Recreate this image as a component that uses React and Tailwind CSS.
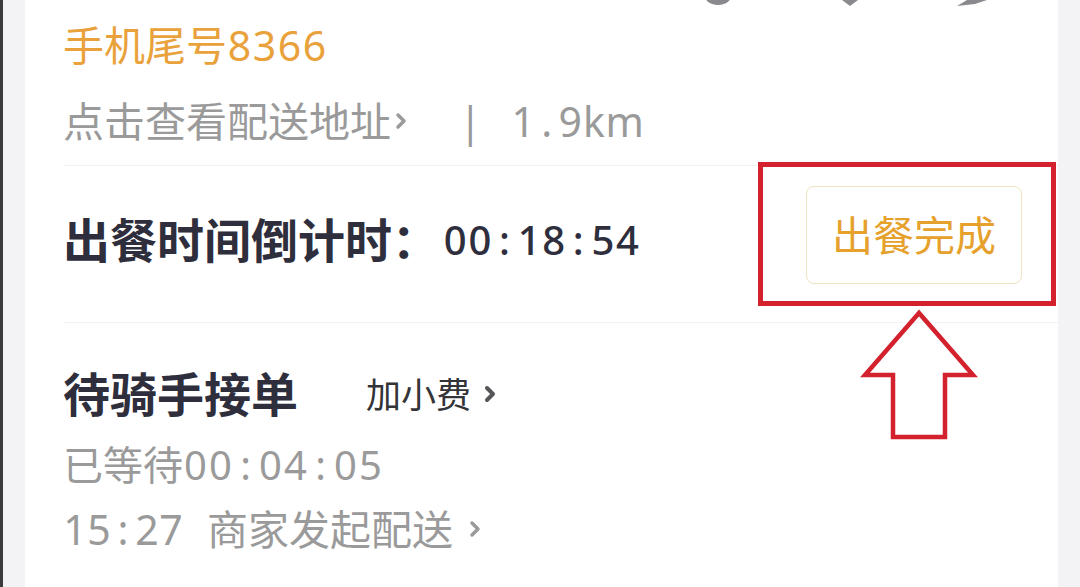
import React from "react";

const Cells = ({ text, w }) =>
  text.split("").map((c, i) => (
    <span key={i} className={`inline-block text-center ${w}`}>
      {c}
    </span>
  ));

const Chevron = ({ className, color = "#9a9a9a", width = 3.5 }) => (
  <svg viewBox="0 0 12 20" width="12" height="20" className={`shrink-0 ${className}`}>
    <path d="M3 4 L9 10 L3 16" fill="none" stroke={color} strokeWidth={width} strokeLinecap="round" strokeLinejoin="round" />
  </svg>
);

export default function App() {
  return (
    <div className="relative w-[1080px] h-[587px] overflow-hidden flex bg-[#f3f2f5] font-['Noto_Sans','Noto_Sans_CJK_SC',sans-serif]">
      <div className="w-[3px] shrink-0 bg-[#3a3a3a]" />
      <div className="w-[22px] shrink-0" />

      <div className="relative w-[1033px] shrink-0 h-full bg-white pl-[38px]">
        {/* icons cut off at the top */}
        <svg className="absolute left-[678px] top-0" width="300" height="8" viewBox="0 0 300 8">
          <ellipse cx="15" cy="-8" rx="15" ry="13" fill="#8a8a8e" />
          <path d="M139 0 L147 6 L155 0 Z" fill="#8a8a8e" />
          <path d="M254 6 L264 0 L284 0 L272 4 Z" fill="#8a8a8e" />
        </svg>

        <div className="h-[90px] flex items-center leading-none text-[41px] text-[#e9a23b]">
          手机尾号
          <Cells text="8366" w="w-[25px]" />
        </div>

        <div className="h-[62px] flex items-center leading-none text-[41px] text-[#9a9a9a]">
          点击查看配送地址
          <Chevron className="ml-[4px]" />
          <span className="ml-[52px]">|</span>
          <span className="ml-[30px]">
            <Cells text="1.9km" w="w-[23.5px]" />
          </span>
        </div>

        <div className="mt-[13px] h-[157px] border-t border-[#f2f2f4] flex items-start justify-between pr-[36px]">
          <div className="mt-[46px] h-[56px] flex items-center leading-none text-[47px] font-bold text-[#2e2e3c]">
            出餐时间倒计时：
            <span className="ml-[4px] text-[40px] font-medium">
              <Cells text="00:18:54" w="w-[24.6px]" />
            </span>
          </div>
          <button className="mt-[20px] w-[216px] h-[98px] border border-[#efe3c1] rounded-[8px] flex items-center justify-center leading-none text-[41px] text-[#e6a12d]">
            出餐完成
          </button>
        </div>

        <div className="border-t border-[#f2f2f4] pt-[43px]">
          <div className="h-[56px] flex items-center leading-none">
            <span className="text-[47px] font-bold text-[#2e2e3c]">待骑手接单</span>
            <span className="ml-[68px] text-[35px] text-[#333338]">加小费</span>
            <Chevron className="ml-[13px]" color="#55555a" width={4} />
          </div>
          <div className="mt-[11px] h-[64px] flex items-center leading-none text-[40px] text-[#9a9a9a]">
            已等待
            <Cells text="00:04:05" w="w-[25px]" />
          </div>
          <div className="h-[64px] flex items-center leading-none text-[41px] text-[#9a9a9a]">
            <Cells text="15:27" w="w-[24px]" />
            <span className="ml-[24px]">商家发起配送</span>
            <Chevron className="ml-[16px]" />
          </div>
        </div>
      </div>

      {/* red annotation */}
      <div className="absolute left-[758px] top-[162px] w-[298px] h-[144px] border-[5px] border-[#d3222d]" />
      <svg className="absolute left-0 top-0 pointer-events-none" width="1080" height="587">
        <path d="M919 313 L865 375 L893 375 L893 437 L945 437 L945 375 L973 375 Z" fill="none" stroke="#d3222d" strokeWidth="4.5" strokeLinejoin="miter" />
      </svg>
    </div>
  );
}
